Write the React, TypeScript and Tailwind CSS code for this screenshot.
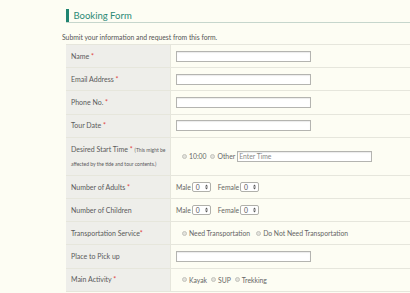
import React from 'react';

const Req: React.FC = () => <span className="text-[#e0413f]"> *</span>;

const Radio: React.FC<{ label: string }> = ({ label }) => (
  <span className="inline-flex items-center gap-[2px]">
    <span className="inline-block w-[5px] h-[5px] rounded-full bg-[#e2e2dc] border border-[#c4c4bc]" />
    <span>{label}</span>
  </span>
);

const TextInput: React.FC<{ placeholder?: string }> = ({ placeholder }) => (
  <div className="w-[135px] h-[11px] bg-white border border-[#b4b4b0] shadow-[inset_0_1px_1px_rgba(0,0,0,0.08)] flex items-center px-[1px] text-[6.8px] text-[#8a8a88]">
    {placeholder}
  </div>
);

const Select: React.FC = () => (
  <span className="inline-flex items-center justify-between w-[19px] h-[10px] bg-white border border-[#b0b0aa] rounded-[2px] pl-[3px] pr-[2px] text-[6.8px] text-[#555]">
    0
    <svg width="3" height="6" viewBox="0 0 3 6">
      <path d="M0 2.4 L1.5 0.4 L3 2.4 Z M0 3.6 L1.5 5.6 L3 3.6 Z" fill="#555" />
    </svg>
  </span>
);

const Counts: React.FC = () => (
  <div className="flex items-center">
    <span className="mr-[1px]">Male</span>
    <Select />
    <span className="ml-[7px] mr-[1px]">Female</span>
    <Select />
  </div>
);

const Row: React.FC<{ label: React.ReactNode; tall?: boolean; children?: React.ReactNode }> = ({
  label,
  tall,
  children,
}) => (
  <div className={`flex border-b border-[#e6e6dc] ${tall ? 'h-[38px]' : 'h-[23.2px]'}`}>
    <div className="w-[105px] shrink-0 bg-[#eeeeea] border-r border-[#e6e6dc] pl-[5px] flex items-center text-[7px] text-[#5a5a5a]">
      {label}
    </div>
    <div className="flex-1 pl-[5px] flex items-center text-[6.8px] font-normal text-[#666]">{children}</div>
  </div>
);

export default function App() {
  return (
    <div className="w-[410px] h-[293px] overflow-hidden bg-[#fdfdf3] font-['Lato','Noto_Sans',sans-serif]">
      <div className="pt-[9px]">
        <div className="ml-[66px] h-[14px] flex border-b border-[#c6d6cc]">
          <div className="w-[2.5px] bg-[#1f8470]" />
          <div className="pl-[5px] text-[9.5px] leading-[14px] text-[#2b8a76]">Booking Form</div>
        </div>
      </div>
      <p className="ml-[62px] mt-[10px] text-[6.8px] leading-[8px] text-[#555]">
        Submit your information and request from this form.
      </p>
      <div className="ml-[66px] mt-[3px] w-[360px] border-t border-[#e6e6dc]">
        <Row label={<span>Name<Req /></span>}>
          <TextInput />
        </Row>
        <Row label={<span>Email Address<Req /></span>}>
          <TextInput />
        </Row>
        <Row label={<span>Phone No.<Req /></span>}>
          <TextInput />
        </Row>
        <Row label={<span>Tour Date<Req /></span>}>
          <TextInput />
        </Row>
        <Row
          tall
          label={
            <div className="leading-[14px]">
              <div>
                Desired Start Time<Req /> <span className="text-[5px]">(This might be</span>
              </div>
              <div className="text-[5px]">affected by the tide and tour contents.)</div>
            </div>
          }
        >
          <div className="pl-[6px] flex items-center gap-[4px]">
            <Radio label="10:00" />
            <span className="inline-flex items-center gap-[2px]">
              <Radio label="Other" />
              <TextInput placeholder="Enter Time" />
            </span>
          </div>
        </Row>
        <Row label={<span>Number of Adults<Req /></span>}>
          <Counts />
        </Row>
        <Row label="Number of Children">
          <Counts />
        </Row>
        <Row label={<span>Transportation Service<span className="text-[#e0413f]">*</span></span>}>
          <div className="pl-[6px] flex items-center gap-[6px]">
            <Radio label="Need Transportation" />
            <Radio label="Do Not Need Transportation" />
          </div>
        </Row>
        <Row label="Place to Pick up">
          <TextInput />
        </Row>
        <Row label={<span>Main Activity<Req /></span>}>
          <div className="pl-[6px] flex items-center gap-[4px]">
            <Radio label="Kayak" />
            <Radio label="SUP" />
            <Radio label="Trekking" />
          </div>
        </Row>
      </div>
    </div>
  );
}
